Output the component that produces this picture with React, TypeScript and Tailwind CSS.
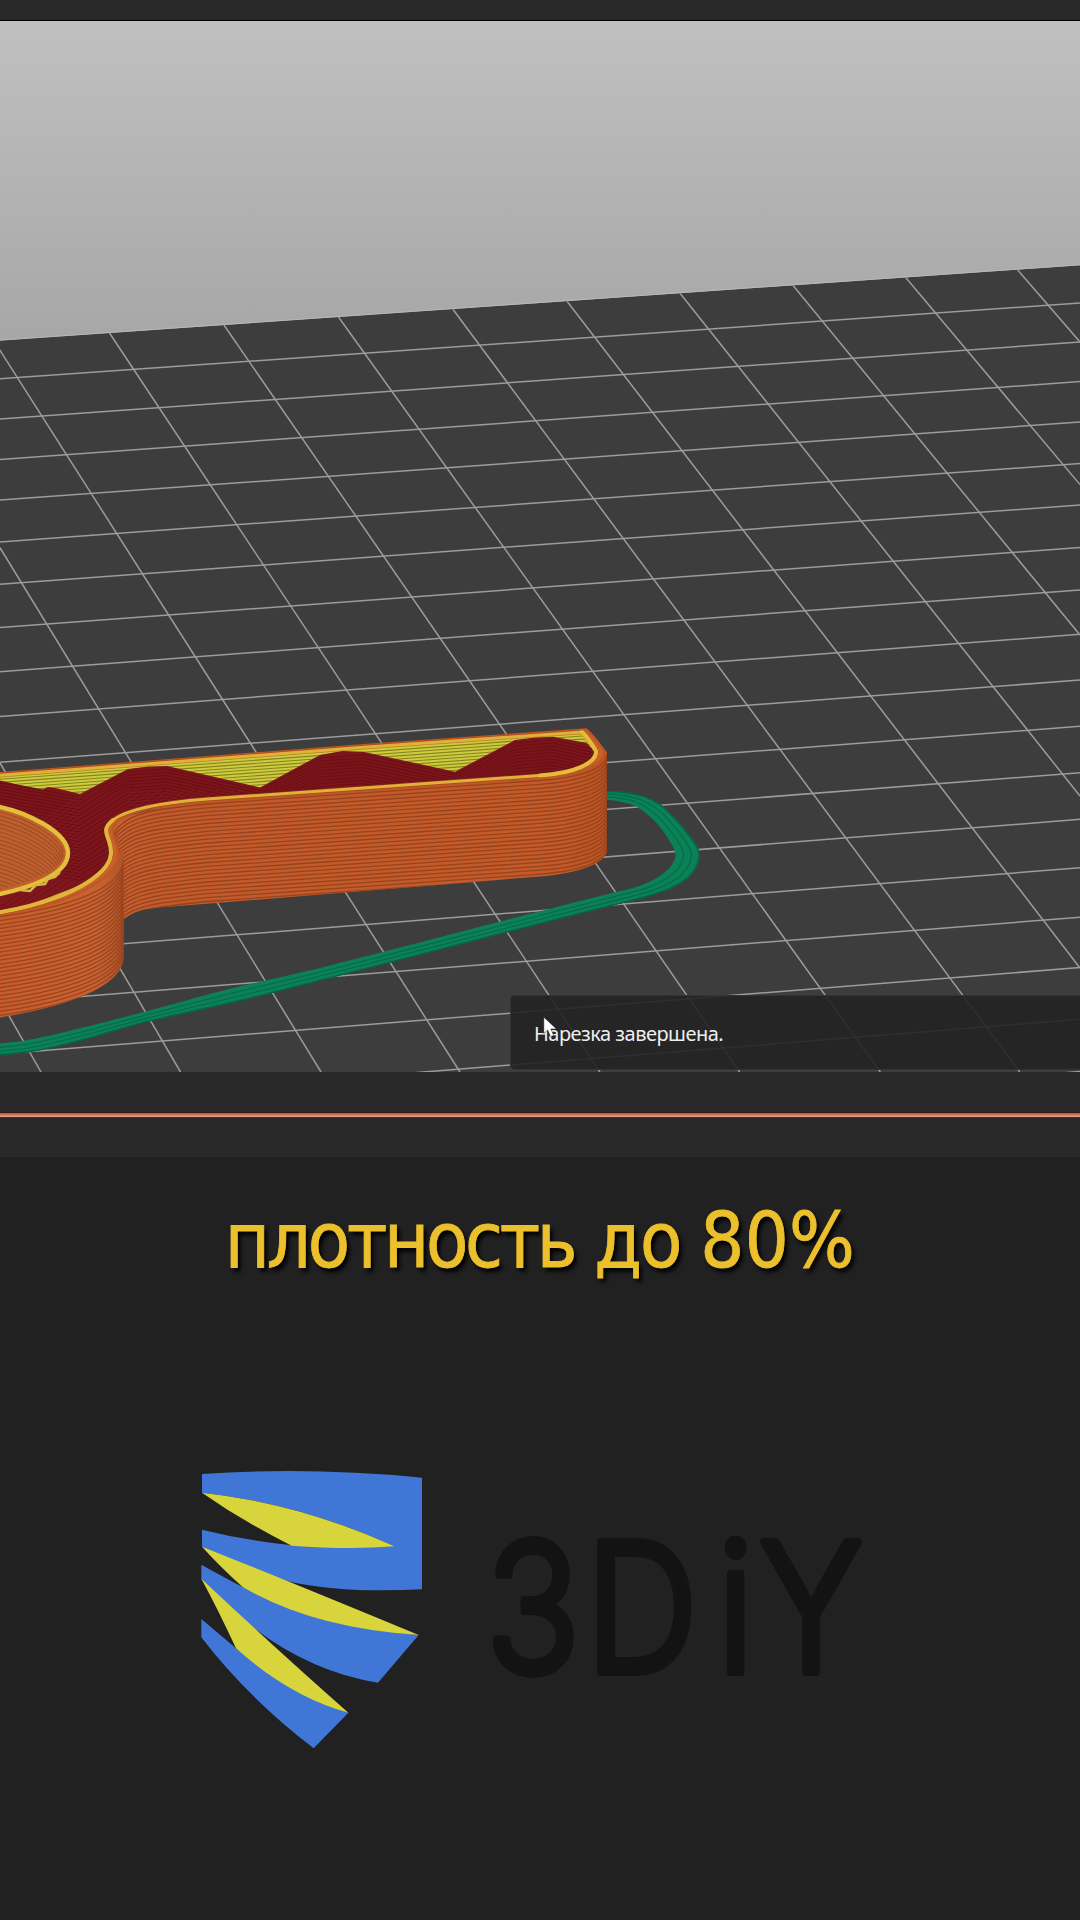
type Point = [number, number];

/* Bed grid lines that run away from the viewer: [x1, y1, x2, y2]. */
const depthLines: [number, number, number, number][] = [
  [0, 1000, 41, 1072],
  [0, 763, 180.5, 1072],
  [0, 547.7, 321, 1072],
  [-6, 341, 460, 1072],
  [109.5, 333, 599.9, 1072],
  [223.9, 325, 739.7, 1072],
  [338.5, 317, 880.3, 1072],
  [452.9, 309.3, 1019.8, 1072],
  [567.2, 301.5, 1080, 968],
  [680.2, 293.5, 1080, 796],
  [793.1, 285.5, 1080, 635],
  [905.7, 277.6, 1080, 484.6],
  [1017.7, 270, 1080, 342],
];

/* Bed grid lines that run across: [y at x = 0, y at x = 1080]. */
const crossLines: [number, number][] = [
  [378.8, 303],
  [419, 342],
  [459.4, 381.6],
  [500, 422],
  [541.9, 463.5],
  [584.3, 505],
  [627.5, 547.4],
  [671.7, 590],
  [716.4, 634.3],
  [762.3, 680],
  [809, 726.3],
  [856.5, 772.7],
  [905, 819.3],
  [953.6, 867.7],
  [1002.9, 917.3],
  [1054, 967.5],
  [1106, 1019.3],
  [1160, 1071.5],
];

const skirtOuter: Point[] = [
  [600, 791], [618, 791.5], [640, 795], [660, 804], [677, 820], [691, 837], [699, 850], [698.5, 863],
  [690, 876.5], [674, 887], [653, 895], [623, 903], [553, 920.5], [340, 975.5], [240, 1001], [147, 1022], [83, 1040], [33, 1051.5], [-10, 1056],
];
const skirtInner: Point[] = [
  [600, 799], [614, 800.5], [633, 805], [648, 815], [659, 826], [669, 840], [675.5, 853], [673, 863],
  [666, 871], [653, 880], [633, 888], [608, 894], [545, 910], [332, 965], [233, 988], [140, 1013], [75, 1029.5], [28, 1040], [-10, 1044.5],
];

function mix(t: number): Point[] {
  return skirtOuter.map(([x, y], i) => [
    x + (skirtInner[i][0] - x) * t,
    y + (skirtInner[i][1] - y) * t,
  ]);
}

/* Catmull-Rom spline through the points, written as cubic segments. */
function spline(pts: Point[], first = "M"): string {
  let d = `${first}${pts[0][0]},${pts[0][1]}`;
  for (let i = 0; i < pts.length - 1; i++) {
    const p0 = pts[Math.max(i - 1, 0)];
    const p1 = pts[i];
    const p2 = pts[i + 1];
    const p3 = pts[Math.min(i + 2, pts.length - 1)];
    d += `C${p1[0] + (p2[0] - p0[0]) / 6},${p1[1] + (p2[1] - p0[1]) / 6} ${p2[0] - (p3[0] - p1[0]) / 6},${p2[1] - (p3[1] - p1[1]) / 6} ${p2[0]},${p2[1]}`;
  }
  return d;
}

const layers = Array.from({ length: 27 }, (_, i) => i);

const armEdge =
  "M121,852 C113,838 110,830 122,822 C134,811 155,807 207,802 L540,778.5 C575,776 607,768 607,752";
const ringEdge = "M-10,916 C45,909 123.5,893 123.5,857";
const armWall =
  "M124,919 C134,911 145,908.5 165,907 L213,903.3 L540,876.5 C575,874 607,864 607,850 L607,752 L590,745 L560,770 L207,795 L113,820 L113,860 Z";
const ringWall = "M-10,1019 C45,1011 123.5,992 123.5,957 L123.5,853 L113,850 L-10,905 Z";

const topFace =
  "M-10,776 L360,747.5 L582,732 C587,737 592,744 596,751 C597,763 575,773 540,775.5 L207,799 C155,803 125,811 113,820 C102,829 107,834 109,841 C112,850 113,860 102,871 C80,893 35,907 -10,914 Z";
const hole =
  "M-10,805 C28,811 68,833 68,853 C68,874 33,888 -10,896 Z";
const solidFill =
  "M-10,778 L0,780.5 L20,785 L30,787 L43,789.5 L48,787 L58,788.5 L80,794 L128,769 L148,766.5 L167,766 L260,787.5 L320,755 L342,751 L363,751.7 L455,771.7 L515,740 L535,737.5 L553,736.7 L587,743 L598,756 L598,780 L110,830 L120,870 L-10,920 Z";

function Bed() {
  return (
    <g>
      <path d="M0,340.6 L1080,265.2 V1072 H0 Z" fill="#3d3d3d" />
      <path d="M0,340.2 L1080,264.8" stroke="#b8b8b8" strokeWidth="1" />
      <g stroke="#9c9c9c" strokeWidth="1.5">
        {depthLines.map(([x1, y1, x2, y2]) => (
          <line key={`${x1}-${y1}`} x1={x1} y1={y1} x2={x2} y2={y2} />
        ))}
        {crossLines.map(([a, b]) => (
          <line key={a} x1={0} y1={a} x2={1080} y2={b} />
        ))}
      </g>
    </g>
  );
}

function Skirt() {
  return (
    <g fill="none">
      <path
        d={`${spline(skirtOuter)} ${spline([...skirtInner].reverse(), "L")} Z`}
        fill="#0b8158"
      />
      <path d={spline(mix(0.04))} stroke="#066443" strokeWidth="1.4" />
      <path d={spline(mix(0.35))} stroke="#066a47" strokeWidth="1.1" />
      <path d={spline(mix(0.67))} stroke="#066a47" strokeWidth="1.1" />
    </g>
  );
}

function Part() {
  return (
    <g>
      <defs>
        <clipPath id="arm"><path d={armWall} /></clipPath>
        <clipPath id="ring"><path d={ringWall} /></clipPath>
        <clipPath id="face"><path d={topFace} /></clipPath>
        <clipPath id="solid"><path d={solidFill} /></clipPath>
        <clipPath id="hole"><path d={hole} /></clipPath>
        <linearGradient id="armTone" x1="0" x2="1" y1="0" y2="0">
          <stop offset="0" stopColor="#c86232" />
          <stop offset="0.08" stopColor="#c25a2c" />
          <stop offset="0.9" stopColor="#c45a29" />
          <stop offset="1" stopColor="#b95221" />
        </linearGradient>
        <linearGradient id="ringTone" x1="0" x2="1" y1="0" y2="0">
          <stop offset="0" stopColor="#c65b2a" />
          <stop offset="0.8" stopColor="#c96233" />
          <stop offset="1" stopColor="#b0542b" />
        </linearGradient>
      </defs>

      <path d={armWall} fill="url(#armTone)" />
      <g clipPath="url(#arm)" fill="none" stroke="#97431d" strokeWidth="1.3">
        {layers.map((n) => (
          <path key={n} d={armEdge} transform={`translate(0 ${2 + n * 3.9})`} />
        ))}
      </g>

      <path d={ringWall} fill="url(#ringTone)" />
      <g clipPath="url(#ring)" fill="none" stroke="#9a451e" strokeWidth="1.3">
        {layers.map((n) => (
          <path key={n} d={ringEdge} transform={`translate(0 ${2 + n * 3.95})`} />
        ))}
      </g>

      <path
        d="M-10,774 L360,745.5 L586,729.5 C592,734 598,742 605,752 C604,765 580,775 540,778 L207,801.5 C160,804.5 130,811 118,821 C110,830 113,834 115,841 C121,853 119,863 108,874 C85,896 38,910 -10,916 Z"
        fill="#c9602e"
        stroke="#bd5823"
        strokeWidth="2.4"
      />
      <path d={topFace} fill="#cfcb3d" />
      <g clipPath="url(#face)">
        <g stroke="#85841f" strokeWidth="1.1">
          {layers.map((n) => (
            <line key={n} x1="-10" x2="610" y1={780 + n * 3.1} y2={734 + n * 3.1} />
          ))}
        </g>
        <path d={solidFill} fill="#7c151b" />
        <g clipPath="url(#solid)" fill="none" stroke="#680f14" strokeWidth="1">
          {layers.map((n) => (
            <path
              key={n}
              d="M-10,778 L80,794 L128,769 L167,766 L260,787.5 L320,755 L363,751.7 L455,771.7 L515,740 L553,736.7 L600,748"
              transform={`translate(0 ${3 + n * 3.2})`}
            />
          ))}
          {layers.slice(0, 20).map((n) => (
            <line
              key={n}
              x1={-90 + n * 8}
              x2={90 + n * 8}
              y1={905}
              y2={790}
              stroke="#8f2530"
              strokeWidth="0.7"
              opacity={0.7}
            />
          ))}
        </g>
      </g>
      <path d={topFace} fill="none" stroke="#9c3a17" strokeWidth="4.5" opacity="0.5" />
      <path d={topFace} fill="none" stroke="#dfb13a" strokeWidth="3" />
      <path
        d="M582,732 C587,737 592,744 596,751 C597,763 575,773 540,775.5"
        fill="none"
        stroke="#e4bb3b"
        strokeWidth="4"
        strokeLinecap="round"
      />
      <path
        d="M113,820 C102,829 107,834 109,841 C112,850 113,860 102,871 C80,893 35,907 -10,914"
        fill="none"
        stroke="#e0b63a"
        strokeWidth="4"
        strokeLinecap="round"
      />

      <path d={hole} fill="#bd6030" />
      <g clipPath="url(#hole)" fill="none" stroke="#a04c22" strokeWidth="1.1">
        {layers.map((n) => (
          <path
            key={n}
            d="M-10,805 C28,811 68,833 68,853 C68,874 33,888 -10,896"
            transform={`translate(${-4 - n * 0.5} ${n * 3.9})`}
          />
        ))}
      </g>
      <path d={hole} fill="none" stroke="#c4602b" strokeWidth="9" clipPath="url(#hole)" />
      <path d={hole} fill="none" stroke="#e2bf3c" strokeWidth="4.4" />
      <path
        d="M60,872 L55,877 L48,879 L45,884 L36,885 L30,891 L20,890"
        fill="none"
        stroke="#d9b540"
        strokeWidth="2.5"
      />
    </g>
  );
}

function Cursor() {
  return (
    <svg className="absolute left-[32px] top-[20px] h-[22px] w-[17px]" viewBox="0 0 16 20">
      <path
        d="M0.8,0.8 V16.2 L4.4,12.8 L7.2,19 L10,17.8 L7.3,11.8 H12.6 Z"
        fill="#fff"
        stroke="#1b1b1b"
        strokeWidth="0.4"
      />
    </svg>
  );
}

function Toast() {
  return (
    <div className="absolute left-[510px] right-0 top-[974px] flex h-[75px] items-center rounded-l-[5px] border border-r-0 border-[#333333] bg-[#222222]/90 pl-[23px] pt-[2px]">
      <span className="whitespace-nowrap font-['Noto_Sans',sans-serif] text-[20px] leading-none tracking-[-0.52px] text-[#eeeeee]">
        Нарезка завершена.
      </span>
      <Cursor />
    </div>
  );
}

function Shield() {
  return (
    <svg className="h-[310px] w-[250px] shrink-0" viewBox="0 0 750 930">
      <g fill="#4076d6">
        <path d="M36,72 Q360,50 696,83 V418 Q460,430 300,395 Q170,360 36,290 V239 Q160,270 305,286 L612,288 Q330,160 36,128 Z" />
        <path d="M34,344 Q110,386 158,411 Q400,530 686,555 L564,698 Q270,650 34,388 Z" />
        <path d="M34,507 L138,595 Q320,740 475,788 L371,895 Q170,740 34,562 Z" />
      </g>
      <g fill="#d8d43b">
        <path d="M36,128 Q330,160 614,289 Q480,300 305,287 Q160,215 36,128 Z" />
        <path d="M36,290 Q300,395 686,555 Q370,535 158,411 Q90,350 36,290 Z" />
        <path d="M34,386 Q240,580 475,788 Q300,740 138,595 Q85,480 34,386 Z" />
      </g>
    </svg>
  );
}

function Wordmark() {
  return (
    <svg className="h-[240px] w-[400px] shrink-0" viewBox="0 0 400 240">
      <text
        className="font-['Inter',sans-serif] font-light"
        transform="scale(0.87 1)"
        x="6.5 121.5 273 321"
        y="187"
        fontSize="179"
        fill="#131313"
        stroke="#131313"
        strokeWidth="8"
        strokeLinejoin="round"
      >
        3DiY
      </text>
    </svg>
  );
}

export default function App() {
  return (
    <main className="flex h-[1920px] w-[1080px] flex-col overflow-hidden bg-[#212121]">
      <div className="h-[21px] shrink-0 border-b border-black bg-[#292929]" />
      <section className="relative h-[1051px] shrink-0 overflow-hidden bg-linear-to-b from-[#c0c0c0] to-[#a7a7a7] to-30%">
        <svg className="block h-[1051px] w-[1080px]" viewBox="0 21 1080 1051">
          <Bed />
          <Skirt />
          <Part />
        </svg>
        <Toast />
      </section>
      <div className="h-[85px] shrink-0 bg-[#292929] pt-10">
        <div className="h-[6px] border-y border-t-[#3a1512] border-b-[#4d2a22] bg-linear-to-b from-[#a85a48] to-[#eda285]" />
      </div>
      <section className="flex grow flex-col">
        <h1 className="mt-[31px] whitespace-nowrap text-center font-['DejaVu_Sans_Condensed','DejaVu_Sans',sans-serif] text-[77px] leading-[106px] tracking-[-2.1px] text-[#ecc02c] [-webkit-text-stroke:0.8px_#ecc02c] [font-stretch:condensed] [text-shadow:3px_4px_4px_#000]">
          <span className="tracking-[-3.3px]">плотность</span> до{" "}
          <span className="tracking-[0.3px]">80%</span>
        </h1>
        <div className="ml-[190px] mt-[156px] flex items-center gap-10">
          <Shield />
          <Wordmark />
        </div>
      </section>
    </main>
  );
}
